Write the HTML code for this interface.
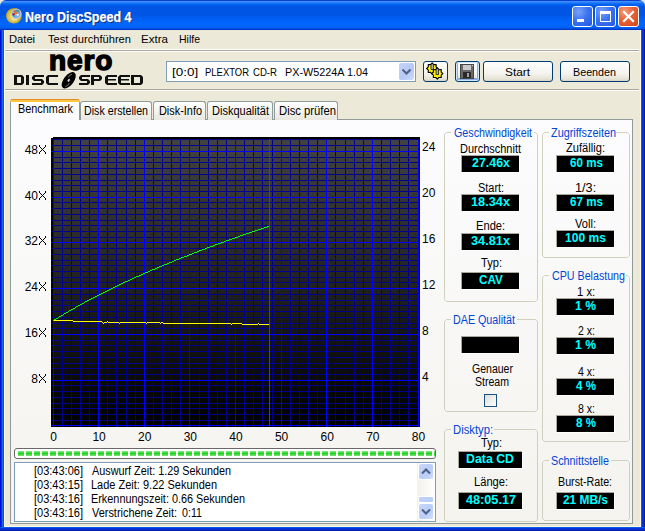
<!DOCTYPE html>
<html><head><meta charset="utf-8">
<style>
html,body{margin:0;padding:0;}
body{width:645px;height:531px;overflow:hidden;position:relative;background:#ECE9D8;font-family:"Liberation Sans", sans-serif;}
.t{position:absolute;white-space:pre;}
.r{position:absolute;box-sizing:border-box;}
svg{position:absolute;}
</style></head><body>

<div class="r" style="left:0px;top:0px;width:645px;height:30px;background:linear-gradient(to bottom,#0A3ED0 0px,#0A3ED0 1px,#3D8FFF 1px,#3D8FFF 2px,#2A7FFF 2px,#2A7FFF 3px,#1070F8 3px,#1070F8 4px,#0064F0 4px,#0064F0 5px,#005CEA 5px,#005CEA 6px,#0055E5 6px,#0055E5 7px,#0055E5 7px,#0055E5 8px,#0055E5 8px,#0055E5 9px,#0055E5 9px,#0055E5 10px,#0055E5 10px,#0055E5 11px,#0055E5 11px,#0055E5 12px,#0055E5 12px,#0055E5 13px,#0055E5 13px,#0055E5 14px,#0055E5 14px,#0055E5 15px,#0055E5 15px,#0055E5 16px,#005AEC 16px,#005AEC 17px,#005CEE 17px,#005CEE 18px,#005EF0 18px,#005EF0 19px,#0060F2 19px,#0060F2 20px,#0062F6 20px,#0062F6 21px,#0064FA 21px,#0064FA 22px,#0066FF 22px,#0066FF 23px,#0066FF 23px,#0066FF 24px,#0066FE 24px,#0066FE 25px,#0064FA 25px,#0064FA 26px,#0063F8 26px,#0063F8 27px,#0060F4 27px,#0060F4 28px,#0052E0 28px,#0052E0 29px,#0036C8 29px,#0036C8 30px);border-radius:6px 6px 0 0;"></div>
<div class="r" style="left:0px;top:30px;width:4px;height:501px;background:linear-gradient(to right,#0014D0 0px,#0014D0 1px,#0832D8 1px,#0832D8 2px,#1A6AF0 2px,#1A6AF0 3px,#0052E2 3px);"></div>
<div class="r" style="left:641px;top:30px;width:4px;height:501px;background:linear-gradient(to right,#0A5CE8 0px,#0A5CE8 1px,#0831D9 1px,#0831D9 3px,#001A9C 3px);"></div>
<div class="r" style="left:0px;top:527px;width:645px;height:4px;background:linear-gradient(to bottom,#0A5CE8 0px,#0A5CE8 1px,#0831D9 1px,#0831D9 3px,#001A9C 3px);"></div>
<div class="r" style="left:4px;top:30px;width:1px;height:497px;background:#FFF8E4;"></div>
<div class="r" style="left:4px;top:526px;width:637px;height:1px;background:#FFF8E4;"></div>
<div class="r" style="left:640px;top:30px;width:1px;height:497px;background:#FFF8E4;"></div>
<svg style="left:0;top:0" width="30" height="30" viewBox="0 0 30 30">
<defs><radialGradient id="dg" cx="45%" cy="55%" r="55%"><stop offset="0" stop-color="#F4E8A0"/><stop offset="0.5" stop-color="#E0C850"/><stop offset="0.85" stop-color="#C8A828"/><stop offset="1" stop-color="#A08818"/></radialGradient>
<radialGradient id="gg" cx="60%" cy="60%" r="60%"><stop offset="0" stop-color="#A8D8F8"/><stop offset="1" stop-color="#2070D0"/></radialGradient></defs>
<ellipse cx="14" cy="15.8" rx="7.9" ry="7.7" fill="url(#dg)"/>
<ellipse cx="14.5" cy="19.5" rx="3" ry="1.6" fill="#F0E8C0" opacity="0.6"/>
<circle cx="16.3" cy="13.75" r="4.6" fill="url(#gg)" stroke="#C8CCD6" stroke-width="1.3"/>
<path d="M14.3 10.6 L17.5 14.2" stroke="#F06A30" stroke-width="1.5"/>
<path d="M15.2 12.6 L14.2 14.5" stroke="#E85020" stroke-width="1.1"/>
<circle cx="13.5" cy="14.6" r="1.1" fill="#C81010"/>
<circle cx="13.4" cy="12.2" r="0.8" fill="#F8D800"/>
<path d="M16.8 10 L19 11.2" stroke="#30A040" stroke-width="1.2"/>
<circle cx="17.8" cy="14.8" r="1" fill="#F4F4F4"/>
</svg>
<div class="t" style="left:26px;top:10px;font-size:14px;line-height:16px;font-weight:bold;color:#0A1E6E;transform-origin:0 0;transform:scaleX(0.895);">Nero DiscSpeed 4</div>
<div class="t" style="left:25px;top:9px;font-size:14px;line-height:16px;font-weight:bold;color:#FFFFFF;-webkit-text-stroke:0.25px #fff;transform-origin:0 0;transform:scaleX(0.895);">Nero DiscSpeed 4</div>
<div class="r" style="left:572px;top:6px;width:21px;height:21px;border:1px solid #FFFFFF;border-radius:3px;background:radial-gradient(circle at 30% 25%,#7AA2F8 0%,#3D74F0 45%,#2058E6 100%);"></div>
<div class="r" style="left:595px;top:6px;width:21px;height:21px;border:1px solid #FFFFFF;border-radius:3px;background:radial-gradient(circle at 30% 25%,#7AA2F8 0%,#3D74F0 45%,#2058E6 100%);"></div>
<div class="r" style="left:618px;top:6px;width:21px;height:21px;border:1px solid #FFFFFF;border-radius:3px;background:radial-gradient(circle at 30% 25%,#F39C7A 0%,#E5633A 45%,#D2421A 100%);"></div>
<div class="r" style="left:577px;top:19px;width:7px;height:3px;background:#FFFFFF;"></div>
<div class="r" style="left:600px;top:11px;width:11px;height:11px;border:1px solid #fff;border-top-width:3px;"></div>
<svg style="left:618px;top:6px" width="21" height="21" viewBox="0 0 21 21"><path d="M6 6 L15 15 M15 6 L6 15" stroke="#fff" stroke-width="2.2" stroke-linecap="square"/></svg>
<div class="r" style="left:5px;top:49px;width:634px;height:1px;background:#FFFFFF;"></div>
<div class="r" style="left:5px;top:50px;width:634px;height:1px;background:#ACA899;"></div>
<div class="r" style="left:5px;top:51px;width:634px;height:1px;background:#FFFFFF;"></div>
<svg style="left:0;top:0" width="160" height="95" viewBox="0 0 160 95"><path fill-rule="evenodd" fill="#111" d="M14,75 H22 L24,77 V83 L22,85 H14 Z M17,77 V83 H21 V77 Z M26,75 H29 V85 H26 Z M34,75 H44 V77 H35 V79 H42 L44,81 V83 L42,85 H32 V83 H41 V81 H34 L32,79 V77 Z M48,75 H58 V77 H49 V83 H58 V85 H48 L46,83 V77 Z M81,75 H90 V77 H82 V79 H88 L90,81 V83 L88,85 H79 V83 H87 V81 H81 L79,79 V77 Z M91,75 H100 L102,77 V79 L100,81 H94 V85 H91 Z M94,77 V79 H99 V77 Z M107,75 H117 V77 H108 V79 H116 V80.6 H108 V83 H117 V85 H107 L105,83 V77 Z M120,75 H130 V77 H121 V79 H129 V80.6 H121 V83 H130 V85 H120 L118,83 V77 Z M131,75 H141 L143,77 V83 L141,85 H131 Z M134,77 V83 H140 V77 Z"/><text x="49" y="69.5" font-family="Liberation Sans" font-weight="bold" font-size="28" letter-spacing="0.9" fill="#000" stroke="#000" stroke-width="1.5">nero</text><g transform="rotate(-52 68.7 80.3)"><ellipse cx="68.7" cy="80.3" rx="9.6" ry="5" fill="#000"/><ellipse cx="68.7" cy="80.3" rx="1.6" ry="1" fill="#D8D8D0"/><path d="M61.5 81.5 Q64 83.5 67 82.5" stroke="#9A9A90" stroke-width="0.7" fill="none"/><path d="M70.5 78.2 Q73.5 77.5 75.5 79" stroke="#9A9A90" stroke-width="0.7" fill="none"/></g></svg>
<div class="r" style="left:5px;top:89px;width:634px;height:1px;background:#ACA899;"></div>
<div class="r" style="left:5px;top:90px;width:634px;height:1px;background:#FFFFFF;"></div>
<div class="r" style="left:166px;top:61px;width:250px;height:21px;border:1px solid #7F9DB9;background:#fff;"></div>
<div class="r" style="left:399px;top:63px;width:15px;height:17px;border-radius:2px;background:linear-gradient(135deg,#C6D3F7 0%,#B4C9F7 60%,#D0DDFB 100%);"></div>
<svg style="left:399px;top:63px" width="15" height="17" viewBox="0 0 15 17"><path d="M3.5 6.5 L7.5 10.5 L11.5 6.5" stroke="#4D6185" stroke-width="2" fill="none"/></svg>
<div class="r" style="left:423px;top:61px;width:25px;height:21px;border:1px solid #003C74;border-radius:3px;background:linear-gradient(to bottom,#FFFFFF 0%,#F4F3EE 60%,#E6E3D6 90%,#D6D0C5 100%);"></div>
<div class="r" style="left:455px;top:61px;width:25px;height:21px;border:1px solid #003C74;border-radius:3px;background:linear-gradient(to bottom,#FFFFFF 0%,#F4F3EE 60%,#E6E3D6 90%,#D6D0C5 100%);box-shadow:inset 0 0 0 1px #CEE7FF,inset 0 -1px 0 2px #89ADE4;"></div>
<div class="r" style="left:483px;top:61px;width:70px;height:21px;border:1px solid #003C74;border-radius:3px;background:linear-gradient(to bottom,#FFFFFF 0%,#F4F3EE 60%,#E6E3D6 90%,#D6D0C5 100%);"></div>
<div class="r" style="left:560px;top:61px;width:70px;height:21px;border:1px solid #003C74;border-radius:3px;background:linear-gradient(to bottom,#FFFFFF 0%,#F4F3EE 60%,#E6E3D6 90%,#D6D0C5 100%);"></div>
<svg style="left:0;top:0" width="645" height="100"><polygon points="437.80,68.50 436.08,70.11 436.16,72.46 433.81,72.38 432.20,74.10 430.59,72.38 428.24,72.46 428.32,70.11 426.60,68.50 428.32,66.89 428.24,64.54 430.59,64.62 432.20,62.90 433.81,64.62 436.16,64.54 436.08,66.89" fill="#FFF000" stroke="#000" stroke-width="1.1" stroke-linejoin="round"/><polygon points="442.90,73.60 441.18,75.21 441.26,77.56 438.91,77.48 437.30,79.20 435.69,77.48 433.34,77.56 433.42,75.21 431.70,73.60 433.42,71.99 433.34,69.64 435.69,69.72 437.30,68.00 438.91,69.72 441.26,69.64 441.18,71.99" fill="#FFF000" stroke="#000" stroke-width="1.1" stroke-linejoin="round"/><path d="M431 69.5 V64.5 Q432.2 62.8 433.4 64.5 V69.5 Z" fill="#B8B8D0" stroke="#111" stroke-width="0.8"/><path d="M436.1 74.6 V69.6 Q437.3 67.9 438.5 69.6 V74.6 Z" fill="#B8B8D0" stroke="#111" stroke-width="0.8"/></svg>
<svg style="left:460px;top:64px" width="14" height="15" viewBox="0 0 14 15" shape-rendering="crispEdges">
<path d="M0 0 H13 L14 1 V15 H0 Z" fill="#444"/>
<rect x="1" y="1" width="12" height="13" fill="#6A6A6A"/>
<rect x="3" y="1" width="8" height="5" fill="#C8C8C8"/>
<rect x="12" y="1" width="1" height="1" fill="#E0E0E0"/>
<rect x="3" y="8" width="8" height="6" fill="#2A2A2A"/>
<rect x="7" y="9" width="2" height="4" fill="#A0A0A0"/>
</svg>
<div class="r" style="left:10px;top:119px;width:623px;height:405px;border:1px solid #919B9C;border-right-color:#919B9C;background:linear-gradient(to bottom,#FCFCFE 0%,#F4F3EE 100%);"></div>
<div class="r" style="left:80px;top:101px;width:72px;height:19px;border:1px solid #919B9C;border-bottom:none;border-radius:3px 3px 0 0;background:linear-gradient(to bottom,#FFFFFF 0%,#F3F3EF 50%,#E8E8E0 100%);"></div>
<div class="r" style="left:153px;top:101px;width:53px;height:19px;border:1px solid #919B9C;border-bottom:none;border-radius:3px 3px 0 0;background:linear-gradient(to bottom,#FFFFFF 0%,#F3F3EF 50%,#E8E8E0 100%);"></div>
<div class="r" style="left:207px;top:101px;width:66px;height:19px;border:1px solid #919B9C;border-bottom:none;border-radius:3px 3px 0 0;background:linear-gradient(to bottom,#FFFFFF 0%,#F3F3EF 50%,#E8E8E0 100%);"></div>
<div class="r" style="left:274px;top:101px;width:64px;height:19px;border:1px solid #919B9C;border-bottom:none;border-radius:3px 3px 0 0;background:linear-gradient(to bottom,#FFFFFF 0%,#F3F3EF 50%,#E8E8E0 100%);"></div>
<div class="r" style="left:10px;top:99px;width:70px;height:21px;border:1px solid #919B9C;border-bottom:none;border-top:none;border-radius:3px 3px 0 0;background:#FCFCFE;"></div>
<div class="r" style="left:10px;top:99px;width:70px;height:3px;border-radius:3px 3px 0 0;background:linear-gradient(to bottom,#E68B2C 0,#E68B2C 1px,#FFC73C 1px,#FFC73C 3px);"></div>
<svg style="left:0;top:0" width="645" height="531" viewBox="0 0 645 531" shape-rendering="crispEdges">
<defs><linearGradient id="cg" x1="0" y1="0" x2="0" y2="1"><stop offset="0" stop-color="#424242"/><stop offset="1" stop-color="#000"/></linearGradient></defs>
<rect x="51" y="138" width="369" height="289" fill="#000"/>
<rect x="53" y="137" width="367" height="1" fill="#000"/>
<rect x="53" y="139" width="366" height="287" fill="url(#cg)"/>
<rect x="51" y="425" width="368" height="1" fill="#0000FF"/>
<rect x="51" y="420" width="368" height="1" fill="#000088"/>
<rect x="51" y="414" width="368" height="1" fill="#000088"/>
<rect x="51" y="408" width="368" height="1" fill="#000088"/>
<rect x="51" y="403" width="368" height="1" fill="#000088"/>
<rect x="51" y="397" width="368" height="1" fill="#000088"/>
<rect x="51" y="391" width="368" height="1" fill="#000088"/>
<rect x="51" y="385" width="368" height="1" fill="#000088"/>
<rect x="51" y="380" width="368" height="1" fill="#0000FF"/>
<rect x="51" y="374" width="368" height="1" fill="#000088"/>
<rect x="51" y="368" width="368" height="1" fill="#000088"/>
<rect x="51" y="363" width="368" height="1" fill="#000088"/>
<rect x="51" y="357" width="368" height="1" fill="#000088"/>
<rect x="51" y="351" width="368" height="1" fill="#000088"/>
<rect x="51" y="345" width="368" height="1" fill="#000088"/>
<rect x="51" y="340" width="368" height="1" fill="#000088"/>
<rect x="51" y="334" width="368" height="1" fill="#0000FF"/>
<rect x="51" y="328" width="368" height="1" fill="#000088"/>
<rect x="51" y="323" width="368" height="1" fill="#000088"/>
<rect x="51" y="317" width="368" height="1" fill="#000088"/>
<rect x="51" y="311" width="368" height="1" fill="#000088"/>
<rect x="51" y="305" width="368" height="1" fill="#000088"/>
<rect x="51" y="300" width="368" height="1" fill="#000088"/>
<rect x="51" y="294" width="368" height="1" fill="#000088"/>
<rect x="51" y="288" width="368" height="1" fill="#0000FF"/>
<rect x="51" y="282" width="368" height="1" fill="#000088"/>
<rect x="51" y="277" width="368" height="1" fill="#000088"/>
<rect x="51" y="271" width="368" height="1" fill="#000088"/>
<rect x="51" y="265" width="368" height="1" fill="#000088"/>
<rect x="51" y="260" width="368" height="1" fill="#000088"/>
<rect x="51" y="254" width="368" height="1" fill="#000088"/>
<rect x="51" y="248" width="368" height="1" fill="#000088"/>
<rect x="51" y="242" width="368" height="1" fill="#0000FF"/>
<rect x="51" y="237" width="368" height="1" fill="#000088"/>
<rect x="51" y="231" width="368" height="1" fill="#000088"/>
<rect x="51" y="225" width="368" height="1" fill="#000088"/>
<rect x="51" y="220" width="368" height="1" fill="#000088"/>
<rect x="51" y="214" width="368" height="1" fill="#000088"/>
<rect x="51" y="208" width="368" height="1" fill="#000088"/>
<rect x="51" y="202" width="368" height="1" fill="#000088"/>
<rect x="51" y="197" width="368" height="1" fill="#0000FF"/>
<rect x="51" y="191" width="368" height="1" fill="#000088"/>
<rect x="51" y="185" width="368" height="1" fill="#000088"/>
<rect x="51" y="180" width="368" height="1" fill="#000088"/>
<rect x="51" y="174" width="368" height="1" fill="#000088"/>
<rect x="51" y="168" width="368" height="1" fill="#000088"/>
<rect x="51" y="162" width="368" height="1" fill="#000088"/>
<rect x="51" y="157" width="368" height="1" fill="#000088"/>
<rect x="51" y="151" width="368" height="1" fill="#0000FF"/>
<rect x="51" y="145" width="368" height="1" fill="#000088"/>
<rect x="51" y="139" width="368" height="1" fill="#000088"/>
<rect x="53" y="139" width="1" height="288" fill="#0000FF"/>
<rect x="62" y="139" width="1" height="288" fill="#000088"/>
<rect x="71" y="139" width="1" height="288" fill="#000088"/>
<rect x="80" y="139" width="1" height="288" fill="#000088"/>
<rect x="89" y="139" width="1" height="288" fill="#000088"/>
<rect x="98" y="139" width="1" height="288" fill="#0000FF"/>
<rect x="107" y="139" width="1" height="288" fill="#000088"/>
<rect x="116" y="139" width="1" height="288" fill="#000088"/>
<rect x="126" y="139" width="1" height="288" fill="#000088"/>
<rect x="135" y="139" width="1" height="288" fill="#000088"/>
<rect x="144" y="139" width="1" height="288" fill="#0000FF"/>
<rect x="153" y="139" width="1" height="288" fill="#000088"/>
<rect x="162" y="139" width="1" height="288" fill="#000088"/>
<rect x="171" y="139" width="1" height="288" fill="#000088"/>
<rect x="180" y="139" width="1" height="288" fill="#000088"/>
<rect x="189" y="139" width="1" height="288" fill="#0000FF"/>
<rect x="199" y="139" width="1" height="288" fill="#000088"/>
<rect x="208" y="139" width="1" height="288" fill="#000088"/>
<rect x="217" y="139" width="1" height="288" fill="#000088"/>
<rect x="226" y="139" width="1" height="288" fill="#000088"/>
<rect x="235" y="139" width="1" height="288" fill="#0000FF"/>
<rect x="244" y="139" width="1" height="288" fill="#000088"/>
<rect x="253" y="139" width="1" height="288" fill="#000088"/>
<rect x="262" y="139" width="1" height="288" fill="#000088"/>
<rect x="272" y="139" width="1" height="288" fill="#000088"/>
<rect x="281" y="139" width="1" height="288" fill="#0000FF"/>
<rect x="290" y="139" width="1" height="288" fill="#000088"/>
<rect x="299" y="139" width="1" height="288" fill="#000088"/>
<rect x="308" y="139" width="1" height="288" fill="#000088"/>
<rect x="317" y="139" width="1" height="288" fill="#000088"/>
<rect x="326" y="139" width="1" height="288" fill="#0000FF"/>
<rect x="335" y="139" width="1" height="288" fill="#000088"/>
<rect x="345" y="139" width="1" height="288" fill="#000088"/>
<rect x="354" y="139" width="1" height="288" fill="#000088"/>
<rect x="363" y="139" width="1" height="288" fill="#000088"/>
<rect x="372" y="139" width="1" height="288" fill="#0000FF"/>
<rect x="381" y="139" width="1" height="288" fill="#000088"/>
<rect x="390" y="139" width="1" height="288" fill="#000088"/>
<rect x="399" y="139" width="1" height="288" fill="#000088"/>
<rect x="408" y="139" width="1" height="288" fill="#000088"/>
<rect x="418" y="139" width="1" height="288" fill="#0000FF"/>
<rect x="51" y="425" width="368" height="1" fill="#0000FF"/>
<rect x="51" y="380" width="368" height="1" fill="#0000FF"/>
<rect x="51" y="334" width="368" height="1" fill="#0000FF"/>
<rect x="51" y="288" width="368" height="1" fill="#0000FF"/>
<rect x="51" y="242" width="368" height="1" fill="#0000FF"/>
<rect x="51" y="197" width="368" height="1" fill="#0000FF"/>
<rect x="51" y="151" width="368" height="1" fill="#0000FF"/>
<rect x="51" y="139" width="368" height="1" fill="#000088"/>
<rect x="53" y="320" width="1" height="1" fill="#FFFF00"/><rect x="54" y="320" width="1" height="1" fill="#FFFF00"/><rect x="55" y="320" width="1" height="1" fill="#FFFF00"/><rect x="56" y="320" width="1" height="1" fill="#FFFF00"/><rect x="57" y="320" width="1" height="1" fill="#FFFF00"/><rect x="58" y="320" width="1" height="1" fill="#FFFF00"/><rect x="59" y="320" width="1" height="1" fill="#FFFF00"/><rect x="60" y="320" width="1" height="1" fill="#FFFF00"/><rect x="61" y="320" width="1" height="1" fill="#FFFF00"/><rect x="62" y="320" width="1" height="1" fill="#FFFF00"/><rect x="63" y="320" width="1" height="1" fill="#FFFF00"/><rect x="64" y="320" width="1" height="1" fill="#FFFF00"/><rect x="65" y="320" width="1" height="1" fill="#FFFF00"/><rect x="66" y="320" width="1" height="1" fill="#FFFF00"/><rect x="67" y="320" width="1" height="1" fill="#FFFF00"/><rect x="68" y="320" width="1" height="1" fill="#FFFF00"/><rect x="69" y="320" width="1" height="1" fill="#FFFF00"/><rect x="70" y="320" width="1" height="1" fill="#FFFF00"/><rect x="71" y="320" width="1" height="1" fill="#FFFF00"/><rect x="72" y="320" width="1" height="1" fill="#FFFF00"/><rect x="73" y="321" width="1" height="1" fill="#FFFF00"/><rect x="74" y="321" width="1" height="1" fill="#FFFF00"/><rect x="75" y="321" width="1" height="1" fill="#FFFF00"/><rect x="76" y="321" width="1" height="1" fill="#FFFF00"/><rect x="77" y="321" width="1" height="1" fill="#FFFF00"/><rect x="78" y="321" width="1" height="1" fill="#FFFF00"/><rect x="79" y="321" width="1" height="1" fill="#FFFF00"/><rect x="80" y="321" width="1" height="1" fill="#FFFF00"/><rect x="81" y="321" width="1" height="1" fill="#FFFF00"/><rect x="82" y="321" width="1" height="1" fill="#FFFF00"/><rect x="83" y="321" width="1" height="1" fill="#FFFF00"/><rect x="84" y="321" width="1" height="1" fill="#FFFF00"/><rect x="85" y="321" width="1" height="1" fill="#FFFF00"/><rect x="86" y="321" width="1" height="1" fill="#FFFF00"/><rect x="87" y="321" width="1" height="1" fill="#FFFF00"/><rect x="88" y="321" width="1" height="1" fill="#FFFF00"/><rect x="89" y="321" width="1" height="1" fill="#FFFF00"/><rect x="90" y="321" width="1" height="1" fill="#FFFF00"/><rect x="91" y="321" width="1" height="1" fill="#FFFF00"/><rect x="92" y="321" width="1" height="1" fill="#FFFF00"/><rect x="93" y="321" width="1" height="1" fill="#FFFF00"/><rect x="94" y="321" width="1" height="1" fill="#FFFF00"/><rect x="95" y="321" width="1" height="1" fill="#FFFF00"/><rect x="96" y="321" width="1" height="1" fill="#FFFF00"/><rect x="97" y="321" width="1" height="1" fill="#FFFF00"/><rect x="98" y="321" width="1" height="1" fill="#FFFF00"/><rect x="99" y="321" width="1" height="1" fill="#FFFF00"/><rect x="100" y="321" width="1" height="1" fill="#FFFF00"/><rect x="101" y="321" width="1" height="1" fill="#FFFF00"/><rect x="102" y="322" width="1" height="1" fill="#FFFF00"/><rect x="103" y="323" width="1" height="1" fill="#FFFF00"/><rect x="104" y="322" width="1" height="1" fill="#FFFF00"/><rect x="105" y="322" width="1" height="1" fill="#FFFF00"/><rect x="106" y="322" width="1" height="1" fill="#FFFF00"/><rect x="107" y="321" width="1" height="1" fill="#FFFF00"/><rect x="108" y="322" width="1" height="1" fill="#FFFF00"/><rect x="109" y="322" width="1" height="1" fill="#FFFF00"/><rect x="110" y="322" width="1" height="1" fill="#FFFF00"/><rect x="111" y="322" width="1" height="1" fill="#FFFF00"/><rect x="112" y="322" width="1" height="1" fill="#FFFF00"/><rect x="113" y="322" width="1" height="1" fill="#FFFF00"/><rect x="114" y="322" width="1" height="1" fill="#FFFF00"/><rect x="115" y="322" width="1" height="1" fill="#FFFF00"/><rect x="116" y="322" width="1" height="1" fill="#FFFF00"/><rect x="117" y="322" width="1" height="1" fill="#FFFF00"/><rect x="118" y="322" width="1" height="1" fill="#FFFF00"/><rect x="119" y="323" width="1" height="1" fill="#FFFF00"/><rect x="120" y="322" width="1" height="1" fill="#FFFF00"/><rect x="121" y="322" width="1" height="1" fill="#FFFF00"/><rect x="122" y="322" width="1" height="1" fill="#FFFF00"/><rect x="123" y="322" width="1" height="1" fill="#FFFF00"/><rect x="124" y="322" width="1" height="1" fill="#FFFF00"/><rect x="125" y="322" width="1" height="1" fill="#FFFF00"/><rect x="126" y="322" width="1" height="1" fill="#FFFF00"/><rect x="127" y="322" width="1" height="1" fill="#FFFF00"/><rect x="128" y="322" width="1" height="1" fill="#FFFF00"/><rect x="129" y="322" width="1" height="1" fill="#FFFF00"/><rect x="130" y="322" width="1" height="1" fill="#FFFF00"/><rect x="131" y="322" width="1" height="1" fill="#FFFF00"/><rect x="132" y="322" width="1" height="1" fill="#FFFF00"/><rect x="133" y="322" width="1" height="1" fill="#FFFF00"/><rect x="134" y="322" width="1" height="1" fill="#FFFF00"/><rect x="135" y="322" width="1" height="1" fill="#FFFF00"/><rect x="136" y="322" width="1" height="1" fill="#FFFF00"/><rect x="137" y="322" width="1" height="1" fill="#FFFF00"/><rect x="138" y="322" width="1" height="1" fill="#FFFF00"/><rect x="139" y="322" width="1" height="1" fill="#FFFF00"/><rect x="140" y="322" width="1" height="1" fill="#FFFF00"/><rect x="141" y="322" width="1" height="1" fill="#FFFF00"/><rect x="142" y="322" width="1" height="1" fill="#FFFF00"/><rect x="143" y="322" width="1" height="1" fill="#FFFF00"/><rect x="144" y="322" width="1" height="1" fill="#FFFF00"/><rect x="145" y="322" width="1" height="1" fill="#FFFF00"/><rect x="146" y="323" width="1" height="1" fill="#FFFF00"/><rect x="147" y="322" width="1" height="1" fill="#FFFF00"/><rect x="148" y="322" width="1" height="1" fill="#FFFF00"/><rect x="149" y="322" width="1" height="1" fill="#FFFF00"/><rect x="150" y="322" width="1" height="1" fill="#FFFF00"/><rect x="151" y="322" width="1" height="1" fill="#FFFF00"/><rect x="152" y="322" width="1" height="1" fill="#FFFF00"/><rect x="153" y="322" width="1" height="1" fill="#FFFF00"/><rect x="154" y="322" width="1" height="1" fill="#FFFF00"/><rect x="155" y="322" width="1" height="1" fill="#FFFF00"/><rect x="156" y="322" width="1" height="1" fill="#FFFF00"/><rect x="157" y="322" width="1" height="1" fill="#FFFF00"/><rect x="158" y="322" width="1" height="1" fill="#FFFF00"/><rect x="159" y="322" width="1" height="1" fill="#FFFF00"/><rect x="160" y="323" width="1" height="1" fill="#FFFF00"/><rect x="161" y="322" width="1" height="1" fill="#FFFF00"/><rect x="162" y="322" width="1" height="1" fill="#FFFF00"/><rect x="163" y="323" width="1" height="1" fill="#FFFF00"/><rect x="164" y="323" width="1" height="1" fill="#FFFF00"/><rect x="165" y="323" width="1" height="1" fill="#FFFF00"/><rect x="166" y="323" width="1" height="1" fill="#FFFF00"/><rect x="167" y="323" width="1" height="1" fill="#FFFF00"/><rect x="168" y="323" width="1" height="1" fill="#FFFF00"/><rect x="169" y="323" width="1" height="1" fill="#FFFF00"/><rect x="170" y="323" width="1" height="1" fill="#FFFF00"/><rect x="171" y="323" width="1" height="1" fill="#FFFF00"/><rect x="172" y="323" width="1" height="1" fill="#FFFF00"/><rect x="173" y="323" width="1" height="1" fill="#FFFF00"/><rect x="174" y="323" width="1" height="1" fill="#FFFF00"/><rect x="175" y="323" width="1" height="1" fill="#FFFF00"/><rect x="176" y="323" width="1" height="1" fill="#FFFF00"/><rect x="177" y="323" width="1" height="1" fill="#FFFF00"/><rect x="178" y="323" width="1" height="1" fill="#FFFF00"/><rect x="179" y="323" width="1" height="1" fill="#FFFF00"/><rect x="180" y="323" width="1" height="1" fill="#FFFF00"/><rect x="181" y="323" width="1" height="1" fill="#FFFF00"/><rect x="182" y="323" width="1" height="1" fill="#FFFF00"/><rect x="183" y="323" width="1" height="1" fill="#FFFF00"/><rect x="184" y="323" width="1" height="1" fill="#FFFF00"/><rect x="185" y="323" width="1" height="1" fill="#FFFF00"/><rect x="186" y="323" width="1" height="1" fill="#FFFF00"/><rect x="187" y="323" width="1" height="1" fill="#FFFF00"/><rect x="188" y="323" width="1" height="1" fill="#FFFF00"/><rect x="189" y="323" width="1" height="1" fill="#FFFF00"/><rect x="190" y="323" width="1" height="1" fill="#FFFF00"/><rect x="191" y="323" width="1" height="1" fill="#FFFF00"/><rect x="192" y="323" width="1" height="1" fill="#FFFF00"/><rect x="193" y="323" width="1" height="1" fill="#FFFF00"/><rect x="194" y="323" width="1" height="1" fill="#FFFF00"/><rect x="195" y="323" width="1" height="1" fill="#FFFF00"/><rect x="196" y="323" width="1" height="1" fill="#FFFF00"/><rect x="197" y="323" width="1" height="1" fill="#FFFF00"/><rect x="198" y="323" width="1" height="1" fill="#FFFF00"/><rect x="199" y="323" width="1" height="1" fill="#FFFF00"/><rect x="200" y="323" width="1" height="1" fill="#FFFF00"/><rect x="201" y="323" width="1" height="1" fill="#FFFF00"/><rect x="202" y="323" width="1" height="1" fill="#FFFF00"/><rect x="203" y="323" width="1" height="1" fill="#FFFF00"/><rect x="204" y="323" width="1" height="1" fill="#FFFF00"/><rect x="205" y="323" width="1" height="1" fill="#FFFF00"/><rect x="206" y="323" width="1" height="1" fill="#FFFF00"/><rect x="207" y="323" width="1" height="1" fill="#FFFF00"/><rect x="208" y="323" width="1" height="1" fill="#FFFF00"/><rect x="209" y="323" width="1" height="1" fill="#FFFF00"/><rect x="210" y="323" width="1" height="1" fill="#FFFF00"/><rect x="211" y="323" width="1" height="1" fill="#FFFF00"/><rect x="212" y="323" width="1" height="1" fill="#FFFF00"/><rect x="213" y="323" width="1" height="1" fill="#FFFF00"/><rect x="214" y="323" width="1" height="1" fill="#FFFF00"/><rect x="215" y="323" width="1" height="1" fill="#FFFF00"/><rect x="216" y="323" width="1" height="1" fill="#FFFF00"/><rect x="217" y="323" width="1" height="1" fill="#FFFF00"/><rect x="218" y="323" width="1" height="1" fill="#FFFF00"/><rect x="219" y="323" width="1" height="1" fill="#FFFF00"/><rect x="220" y="323" width="1" height="1" fill="#FFFF00"/><rect x="221" y="323" width="1" height="1" fill="#FFFF00"/><rect x="222" y="323" width="1" height="1" fill="#FFFF00"/><rect x="223" y="323" width="1" height="1" fill="#FFFF00"/><rect x="224" y="323" width="1" height="1" fill="#FFFF00"/><rect x="225" y="323" width="1" height="1" fill="#FFFF00"/><rect x="226" y="323" width="1" height="1" fill="#FFFF00"/><rect x="227" y="323" width="1" height="1" fill="#FFFF00"/><rect x="228" y="323" width="1" height="1" fill="#FFFF00"/><rect x="229" y="323" width="1" height="1" fill="#FFFF00"/><rect x="230" y="323" width="1" height="1" fill="#FFFF00"/><rect x="231" y="324" width="1" height="1" fill="#FFFF00"/><rect x="232" y="323" width="1" height="1" fill="#FFFF00"/><rect x="233" y="323" width="1" height="1" fill="#FFFF00"/><rect x="234" y="323" width="1" height="1" fill="#FFFF00"/><rect x="235" y="323" width="1" height="1" fill="#FFFF00"/><rect x="236" y="323" width="1" height="1" fill="#FFFF00"/><rect x="237" y="323" width="1" height="1" fill="#FFFF00"/><rect x="238" y="323" width="1" height="1" fill="#FFFF00"/><rect x="239" y="323" width="1" height="1" fill="#FFFF00"/><rect x="240" y="323" width="1" height="1" fill="#FFFF00"/><rect x="241" y="323" width="1" height="1" fill="#FFFF00"/><rect x="242" y="324" width="1" height="1" fill="#FFFF00"/><rect x="243" y="324" width="1" height="1" fill="#FFFF00"/><rect x="244" y="324" width="1" height="1" fill="#FFFF00"/><rect x="245" y="324" width="1" height="1" fill="#FFFF00"/><rect x="246" y="324" width="1" height="1" fill="#FFFF00"/><rect x="247" y="324" width="1" height="1" fill="#FFFF00"/><rect x="248" y="324" width="1" height="1" fill="#FFFF00"/><rect x="249" y="324" width="1" height="1" fill="#FFFF00"/><rect x="250" y="324" width="1" height="1" fill="#FFFF00"/><rect x="251" y="324" width="1" height="1" fill="#FFFF00"/><rect x="252" y="324" width="1" height="1" fill="#FFFF00"/><rect x="253" y="324" width="1" height="1" fill="#FFFF00"/><rect x="254" y="324" width="1" height="1" fill="#FFFF00"/><rect x="255" y="324" width="1" height="1" fill="#FFFF00"/><rect x="256" y="324" width="1" height="1" fill="#FFFF00"/><rect x="257" y="324" width="1" height="1" fill="#FFFF00"/><rect x="258" y="323" width="1" height="1" fill="#FFFF00"/><rect x="259" y="324" width="1" height="1" fill="#FFFF00"/><rect x="260" y="324" width="1" height="1" fill="#FFFF00"/><rect x="261" y="324" width="1" height="1" fill="#FFFF00"/><rect x="262" y="324" width="1" height="1" fill="#FFFF00"/><rect x="263" y="324" width="1" height="1" fill="#FFFF00"/><rect x="264" y="324" width="1" height="1" fill="#FFFF00"/><rect x="265" y="324" width="1" height="1" fill="#FFFF00"/><rect x="266" y="324" width="1" height="1" fill="#FFFF00"/><rect x="267" y="324" width="1" height="1" fill="#FFFF00"/><rect x="268" y="324" width="1" height="1" fill="#FFFF00"/>
<rect x="53" y="320" width="1" height="1" fill="#00FF00"/><rect x="54" y="319" width="1" height="1" fill="#00FF00"/><rect x="55" y="319" width="1" height="1" fill="#00FF00"/><rect x="56" y="318" width="1" height="1" fill="#00FF00"/><rect x="57" y="318" width="1" height="1" fill="#00FF00"/><rect x="58" y="317" width="1" height="1" fill="#00FF00"/><rect x="59" y="316" width="1" height="1" fill="#00FF00"/><rect x="60" y="316" width="1" height="1" fill="#00FF00"/><rect x="61" y="315" width="1" height="1" fill="#00FF00"/><rect x="62" y="315" width="1" height="1" fill="#00FF00"/><rect x="63" y="314" width="1" height="1" fill="#00FF00"/><rect x="64" y="313" width="1" height="1" fill="#00FF00"/><rect x="65" y="313" width="1" height="1" fill="#00FF00"/><rect x="66" y="312" width="1" height="1" fill="#00FF00"/><rect x="67" y="312" width="1" height="1" fill="#00FF00"/><rect x="68" y="311" width="1" height="1" fill="#00FF00"/><rect x="69" y="310" width="1" height="1" fill="#00FF00"/><rect x="70" y="310" width="1" height="1" fill="#00FF00"/><rect x="71" y="309" width="1" height="1" fill="#00FF00"/><rect x="72" y="309" width="1" height="1" fill="#00FF00"/><rect x="73" y="308" width="1" height="1" fill="#00FF00"/><rect x="74" y="308" width="1" height="1" fill="#00FF00"/><rect x="75" y="307" width="1" height="1" fill="#00FF00"/><rect x="76" y="306" width="1" height="1" fill="#00FF00"/><rect x="77" y="306" width="1" height="1" fill="#00FF00"/><rect x="78" y="305" width="1" height="1" fill="#00FF00"/><rect x="79" y="305" width="1" height="1" fill="#00FF00"/><rect x="80" y="304" width="1" height="1" fill="#00FF00"/><rect x="81" y="304" width="1" height="1" fill="#00FF00"/><rect x="82" y="303" width="1" height="1" fill="#00FF00"/><rect x="83" y="303" width="1" height="1" fill="#00FF00"/><rect x="84" y="302" width="1" height="1" fill="#00FF00"/><rect x="85" y="301" width="1" height="1" fill="#00FF00"/><rect x="86" y="301" width="1" height="1" fill="#00FF00"/><rect x="87" y="300" width="1" height="1" fill="#00FF00"/><rect x="88" y="300" width="1" height="1" fill="#00FF00"/><rect x="89" y="299" width="1" height="1" fill="#00FF00"/><rect x="90" y="299" width="1" height="1" fill="#00FF00"/><rect x="91" y="298" width="1" height="1" fill="#00FF00"/><rect x="92" y="298" width="1" height="1" fill="#00FF00"/><rect x="93" y="297" width="1" height="1" fill="#00FF00"/><rect x="94" y="297" width="1" height="1" fill="#00FF00"/><rect x="95" y="296" width="1" height="1" fill="#00FF00"/><rect x="96" y="296" width="1" height="1" fill="#00FF00"/><rect x="97" y="295" width="1" height="1" fill="#00FF00"/><rect x="98" y="295" width="1" height="1" fill="#00FF00"/><rect x="99" y="294" width="1" height="1" fill="#00FF00"/><rect x="100" y="294" width="1" height="1" fill="#00FF00"/><rect x="101" y="293" width="1" height="1" fill="#00FF00"/><rect x="102" y="293" width="1" height="1" fill="#00FF00"/><rect x="103" y="292" width="1" height="1" fill="#00FF00"/><rect x="104" y="292" width="1" height="1" fill="#00FF00"/><rect x="105" y="291" width="1" height="1" fill="#00FF00"/><rect x="106" y="291" width="1" height="1" fill="#00FF00"/><rect x="107" y="290" width="1" height="1" fill="#00FF00"/><rect x="108" y="290" width="1" height="1" fill="#00FF00"/><rect x="109" y="289" width="1" height="1" fill="#00FF00"/><rect x="110" y="289" width="1" height="1" fill="#00FF00"/><rect x="111" y="288" width="1" height="1" fill="#00FF00"/><rect x="112" y="288" width="1" height="1" fill="#00FF00"/><rect x="113" y="287" width="1" height="1" fill="#00FF00"/><rect x="114" y="287" width="1" height="1" fill="#00FF00"/><rect x="115" y="286" width="1" height="1" fill="#00FF00"/><rect x="116" y="286" width="1" height="1" fill="#00FF00"/><rect x="117" y="285" width="1" height="1" fill="#00FF00"/><rect x="118" y="285" width="1" height="1" fill="#00FF00"/><rect x="119" y="284" width="1" height="1" fill="#00FF00"/><rect x="120" y="284" width="1" height="1" fill="#00FF00"/><rect x="121" y="283" width="1" height="1" fill="#00FF00"/><rect x="122" y="283" width="1" height="1" fill="#00FF00"/><rect x="123" y="282" width="1" height="1" fill="#00FF00"/><rect x="124" y="282" width="1" height="1" fill="#00FF00"/><rect x="125" y="281" width="1" height="1" fill="#00FF00"/><rect x="126" y="281" width="1" height="1" fill="#00FF00"/><rect x="127" y="281" width="1" height="1" fill="#00FF00"/><rect x="128" y="280" width="1" height="1" fill="#00FF00"/><rect x="129" y="280" width="1" height="1" fill="#00FF00"/><rect x="130" y="279" width="1" height="1" fill="#00FF00"/><rect x="131" y="279" width="1" height="1" fill="#00FF00"/><rect x="132" y="278" width="1" height="1" fill="#00FF00"/><rect x="133" y="278" width="1" height="1" fill="#00FF00"/><rect x="134" y="277" width="1" height="1" fill="#00FF00"/><rect x="135" y="277" width="1" height="1" fill="#00FF00"/><rect x="136" y="276" width="1" height="1" fill="#00FF00"/><rect x="137" y="276" width="1" height="1" fill="#00FF00"/><rect x="138" y="276" width="1" height="1" fill="#00FF00"/><rect x="139" y="275" width="1" height="1" fill="#00FF00"/><rect x="140" y="275" width="1" height="1" fill="#00FF00"/><rect x="141" y="274" width="1" height="1" fill="#00FF00"/><rect x="142" y="274" width="1" height="1" fill="#00FF00"/><rect x="143" y="273" width="1" height="1" fill="#00FF00"/><rect x="144" y="273" width="1" height="1" fill="#00FF00"/><rect x="145" y="272" width="1" height="1" fill="#00FF00"/><rect x="146" y="272" width="1" height="1" fill="#00FF00"/><rect x="147" y="272" width="1" height="1" fill="#00FF00"/><rect x="148" y="271" width="1" height="1" fill="#00FF00"/><rect x="149" y="271" width="1" height="1" fill="#00FF00"/><rect x="150" y="270" width="1" height="1" fill="#00FF00"/><rect x="151" y="270" width="1" height="1" fill="#00FF00"/><rect x="152" y="269" width="1" height="1" fill="#00FF00"/><rect x="153" y="269" width="1" height="1" fill="#00FF00"/><rect x="154" y="269" width="1" height="1" fill="#00FF00"/><rect x="155" y="268" width="1" height="1" fill="#00FF00"/><rect x="156" y="268" width="1" height="1" fill="#00FF00"/><rect x="157" y="267" width="1" height="1" fill="#00FF00"/><rect x="158" y="267" width="1" height="1" fill="#00FF00"/><rect x="159" y="266" width="1" height="1" fill="#00FF00"/><rect x="160" y="266" width="1" height="1" fill="#00FF00"/><rect x="161" y="266" width="1" height="1" fill="#00FF00"/><rect x="162" y="265" width="1" height="1" fill="#00FF00"/><rect x="163" y="265" width="1" height="1" fill="#00FF00"/><rect x="164" y="264" width="1" height="1" fill="#00FF00"/><rect x="165" y="264" width="1" height="1" fill="#00FF00"/><rect x="166" y="264" width="1" height="1" fill="#00FF00"/><rect x="167" y="263" width="1" height="1" fill="#00FF00"/><rect x="168" y="263" width="1" height="1" fill="#00FF00"/><rect x="169" y="262" width="1" height="1" fill="#00FF00"/><rect x="170" y="262" width="1" height="1" fill="#00FF00"/><rect x="171" y="262" width="1" height="1" fill="#00FF00"/><rect x="172" y="261" width="1" height="1" fill="#00FF00"/><rect x="173" y="261" width="1" height="1" fill="#00FF00"/><rect x="174" y="260" width="1" height="1" fill="#00FF00"/><rect x="175" y="260" width="1" height="1" fill="#00FF00"/><rect x="176" y="259" width="1" height="1" fill="#00FF00"/><rect x="177" y="259" width="1" height="1" fill="#00FF00"/><rect x="178" y="259" width="1" height="1" fill="#00FF00"/><rect x="179" y="258" width="1" height="1" fill="#00FF00"/><rect x="180" y="258" width="1" height="1" fill="#00FF00"/><rect x="181" y="257" width="1" height="1" fill="#00FF00"/><rect x="182" y="257" width="1" height="1" fill="#00FF00"/><rect x="183" y="257" width="1" height="1" fill="#00FF00"/><rect x="184" y="256" width="1" height="1" fill="#00FF00"/><rect x="185" y="256" width="1" height="1" fill="#00FF00"/><rect x="186" y="256" width="1" height="1" fill="#00FF00"/><rect x="187" y="255" width="1" height="1" fill="#00FF00"/><rect x="188" y="255" width="1" height="1" fill="#00FF00"/><rect x="189" y="254" width="1" height="1" fill="#00FF00"/><rect x="190" y="254" width="1" height="1" fill="#00FF00"/><rect x="191" y="254" width="1" height="1" fill="#00FF00"/><rect x="192" y="253" width="1" height="1" fill="#00FF00"/><rect x="193" y="253" width="1" height="1" fill="#00FF00"/><rect x="194" y="252" width="1" height="1" fill="#00FF00"/><rect x="195" y="252" width="1" height="1" fill="#00FF00"/><rect x="196" y="252" width="1" height="1" fill="#00FF00"/><rect x="197" y="251" width="1" height="1" fill="#00FF00"/><rect x="198" y="251" width="1" height="1" fill="#00FF00"/><rect x="199" y="250" width="1" height="1" fill="#00FF00"/><rect x="200" y="250" width="1" height="1" fill="#00FF00"/><rect x="201" y="250" width="1" height="1" fill="#00FF00"/><rect x="202" y="249" width="1" height="1" fill="#00FF00"/><rect x="203" y="249" width="1" height="1" fill="#00FF00"/><rect x="204" y="249" width="1" height="1" fill="#00FF00"/><rect x="205" y="248" width="1" height="1" fill="#00FF00"/><rect x="206" y="248" width="1" height="1" fill="#00FF00"/><rect x="207" y="247" width="1" height="1" fill="#00FF00"/><rect x="208" y="247" width="1" height="1" fill="#00FF00"/><rect x="209" y="247" width="1" height="1" fill="#00FF00"/><rect x="210" y="246" width="1" height="1" fill="#00FF00"/><rect x="211" y="246" width="1" height="1" fill="#00FF00"/><rect x="212" y="246" width="1" height="1" fill="#00FF00"/><rect x="213" y="245" width="1" height="1" fill="#00FF00"/><rect x="214" y="245" width="1" height="1" fill="#00FF00"/><rect x="215" y="244" width="1" height="1" fill="#00FF00"/><rect x="216" y="244" width="1" height="1" fill="#00FF00"/><rect x="217" y="244" width="1" height="1" fill="#00FF00"/><rect x="218" y="243" width="1" height="1" fill="#00FF00"/><rect x="219" y="243" width="1" height="1" fill="#00FF00"/><rect x="220" y="243" width="1" height="1" fill="#00FF00"/><rect x="221" y="242" width="1" height="1" fill="#00FF00"/><rect x="222" y="242" width="1" height="1" fill="#00FF00"/><rect x="223" y="242" width="1" height="1" fill="#00FF00"/><rect x="224" y="241" width="1" height="1" fill="#00FF00"/><rect x="225" y="241" width="1" height="1" fill="#00FF00"/><rect x="226" y="240" width="1" height="1" fill="#00FF00"/><rect x="227" y="240" width="1" height="1" fill="#00FF00"/><rect x="228" y="240" width="1" height="1" fill="#00FF00"/><rect x="229" y="239" width="1" height="1" fill="#00FF00"/><rect x="230" y="239" width="1" height="1" fill="#00FF00"/><rect x="231" y="239" width="1" height="1" fill="#00FF00"/><rect x="232" y="238" width="1" height="1" fill="#00FF00"/><rect x="233" y="238" width="1" height="1" fill="#00FF00"/><rect x="234" y="238" width="1" height="1" fill="#00FF00"/><rect x="235" y="237" width="1" height="1" fill="#00FF00"/><rect x="236" y="237" width="1" height="1" fill="#00FF00"/><rect x="237" y="237" width="1" height="1" fill="#00FF00"/><rect x="238" y="236" width="1" height="1" fill="#00FF00"/><rect x="239" y="236" width="1" height="1" fill="#00FF00"/><rect x="240" y="235" width="1" height="1" fill="#00FF00"/><rect x="241" y="235" width="1" height="1" fill="#00FF00"/><rect x="242" y="235" width="1" height="1" fill="#00FF00"/><rect x="243" y="234" width="1" height="1" fill="#00FF00"/><rect x="244" y="234" width="1" height="1" fill="#00FF00"/><rect x="245" y="234" width="1" height="1" fill="#00FF00"/><rect x="246" y="233" width="1" height="1" fill="#00FF00"/><rect x="247" y="233" width="1" height="1" fill="#00FF00"/><rect x="248" y="233" width="1" height="1" fill="#00FF00"/><rect x="249" y="232" width="1" height="1" fill="#00FF00"/><rect x="250" y="232" width="1" height="1" fill="#00FF00"/><rect x="251" y="232" width="1" height="1" fill="#00FF00"/><rect x="252" y="231" width="1" height="1" fill="#00FF00"/><rect x="253" y="231" width="1" height="1" fill="#00FF00"/><rect x="254" y="231" width="1" height="1" fill="#00FF00"/><rect x="255" y="230" width="1" height="1" fill="#00FF00"/><rect x="256" y="230" width="1" height="1" fill="#00FF00"/><rect x="257" y="230" width="1" height="1" fill="#00FF00"/><rect x="258" y="229" width="1" height="1" fill="#00FF00"/><rect x="259" y="229" width="1" height="1" fill="#00FF00"/><rect x="260" y="229" width="1" height="1" fill="#00FF00"/><rect x="261" y="228" width="1" height="1" fill="#00FF00"/><rect x="262" y="228" width="1" height="1" fill="#00FF00"/><rect x="263" y="228" width="1" height="1" fill="#00FF00"/><rect x="264" y="227" width="1" height="1" fill="#00FF00"/><rect x="265" y="227" width="1" height="1" fill="#00FF00"/><rect x="266" y="227" width="1" height="1" fill="#00FF00"/><rect x="267" y="226" width="1" height="1" fill="#00FF00"/><rect x="268" y="226" width="1" height="1" fill="#00FF00"/>
<rect x="269" y="139" width="1" height="287" fill="#FF0000"/>
</svg>
<div class="t" style="left:-2px;width:40px;text-align:right;top:144px;font-size:12px;line-height:12px;font-weight:normal;color:#000;">48</div>
<div class="t" style="left:-2px;width:40px;text-align:right;top:190px;font-size:12px;line-height:12px;font-weight:normal;color:#000;">40</div>
<div class="t" style="left:-2px;width:40px;text-align:right;top:235px;font-size:12px;line-height:12px;font-weight:normal;color:#000;">32</div>
<div class="t" style="left:-2px;width:40px;text-align:right;top:281px;font-size:12px;line-height:12px;font-weight:normal;color:#000;">24</div>
<div class="t" style="left:-2px;width:40px;text-align:right;top:327px;font-size:12px;line-height:12px;font-weight:normal;color:#000;">16</div>
<div class="t" style="left:-2px;width:40px;text-align:right;top:373px;font-size:12px;line-height:12px;font-weight:normal;color:#000;">8</div>
<svg style="left:0;top:0" width="645" height="531"><rect x="39" y="145" width="1" height="1" fill="#000"/><rect x="45" y="145" width="1" height="1" fill="#000"/><rect x="39" y="146" width="1" height="1" fill="#000"/><rect x="45" y="146" width="1" height="1" fill="#000"/><rect x="40" y="147" width="1" height="1" fill="#000"/><rect x="44" y="147" width="1" height="1" fill="#000"/><rect x="41" y="148" width="1" height="1" fill="#000"/><rect x="43" y="148" width="1" height="1" fill="#000"/><rect x="42" y="149" width="1" height="1" fill="#000"/><rect x="41" y="150" width="1" height="1" fill="#000"/><rect x="43" y="150" width="1" height="1" fill="#000"/><rect x="40" y="151" width="1" height="1" fill="#000"/><rect x="44" y="151" width="1" height="1" fill="#000"/><rect x="39" y="152" width="1" height="1" fill="#000"/><rect x="45" y="152" width="1" height="1" fill="#000"/><rect x="39" y="153" width="1" height="1" fill="#000"/><rect x="45" y="153" width="1" height="1" fill="#000"/><rect x="39" y="191" width="1" height="1" fill="#000"/><rect x="45" y="191" width="1" height="1" fill="#000"/><rect x="39" y="192" width="1" height="1" fill="#000"/><rect x="45" y="192" width="1" height="1" fill="#000"/><rect x="40" y="193" width="1" height="1" fill="#000"/><rect x="44" y="193" width="1" height="1" fill="#000"/><rect x="41" y="194" width="1" height="1" fill="#000"/><rect x="43" y="194" width="1" height="1" fill="#000"/><rect x="42" y="195" width="1" height="1" fill="#000"/><rect x="41" y="196" width="1" height="1" fill="#000"/><rect x="43" y="196" width="1" height="1" fill="#000"/><rect x="40" y="197" width="1" height="1" fill="#000"/><rect x="44" y="197" width="1" height="1" fill="#000"/><rect x="39" y="198" width="1" height="1" fill="#000"/><rect x="45" y="198" width="1" height="1" fill="#000"/><rect x="39" y="199" width="1" height="1" fill="#000"/><rect x="45" y="199" width="1" height="1" fill="#000"/><rect x="39" y="236" width="1" height="1" fill="#000"/><rect x="45" y="236" width="1" height="1" fill="#000"/><rect x="39" y="237" width="1" height="1" fill="#000"/><rect x="45" y="237" width="1" height="1" fill="#000"/><rect x="40" y="238" width="1" height="1" fill="#000"/><rect x="44" y="238" width="1" height="1" fill="#000"/><rect x="41" y="239" width="1" height="1" fill="#000"/><rect x="43" y="239" width="1" height="1" fill="#000"/><rect x="42" y="240" width="1" height="1" fill="#000"/><rect x="41" y="241" width="1" height="1" fill="#000"/><rect x="43" y="241" width="1" height="1" fill="#000"/><rect x="40" y="242" width="1" height="1" fill="#000"/><rect x="44" y="242" width="1" height="1" fill="#000"/><rect x="39" y="243" width="1" height="1" fill="#000"/><rect x="45" y="243" width="1" height="1" fill="#000"/><rect x="39" y="244" width="1" height="1" fill="#000"/><rect x="45" y="244" width="1" height="1" fill="#000"/><rect x="39" y="282" width="1" height="1" fill="#000"/><rect x="45" y="282" width="1" height="1" fill="#000"/><rect x="39" y="283" width="1" height="1" fill="#000"/><rect x="45" y="283" width="1" height="1" fill="#000"/><rect x="40" y="284" width="1" height="1" fill="#000"/><rect x="44" y="284" width="1" height="1" fill="#000"/><rect x="41" y="285" width="1" height="1" fill="#000"/><rect x="43" y="285" width="1" height="1" fill="#000"/><rect x="42" y="286" width="1" height="1" fill="#000"/><rect x="41" y="287" width="1" height="1" fill="#000"/><rect x="43" y="287" width="1" height="1" fill="#000"/><rect x="40" y="288" width="1" height="1" fill="#000"/><rect x="44" y="288" width="1" height="1" fill="#000"/><rect x="39" y="289" width="1" height="1" fill="#000"/><rect x="45" y="289" width="1" height="1" fill="#000"/><rect x="39" y="290" width="1" height="1" fill="#000"/><rect x="45" y="290" width="1" height="1" fill="#000"/><rect x="39" y="328" width="1" height="1" fill="#000"/><rect x="45" y="328" width="1" height="1" fill="#000"/><rect x="39" y="329" width="1" height="1" fill="#000"/><rect x="45" y="329" width="1" height="1" fill="#000"/><rect x="40" y="330" width="1" height="1" fill="#000"/><rect x="44" y="330" width="1" height="1" fill="#000"/><rect x="41" y="331" width="1" height="1" fill="#000"/><rect x="43" y="331" width="1" height="1" fill="#000"/><rect x="42" y="332" width="1" height="1" fill="#000"/><rect x="41" y="333" width="1" height="1" fill="#000"/><rect x="43" y="333" width="1" height="1" fill="#000"/><rect x="40" y="334" width="1" height="1" fill="#000"/><rect x="44" y="334" width="1" height="1" fill="#000"/><rect x="39" y="335" width="1" height="1" fill="#000"/><rect x="45" y="335" width="1" height="1" fill="#000"/><rect x="39" y="336" width="1" height="1" fill="#000"/><rect x="45" y="336" width="1" height="1" fill="#000"/><rect x="39" y="374" width="1" height="1" fill="#000"/><rect x="45" y="374" width="1" height="1" fill="#000"/><rect x="39" y="375" width="1" height="1" fill="#000"/><rect x="45" y="375" width="1" height="1" fill="#000"/><rect x="40" y="376" width="1" height="1" fill="#000"/><rect x="44" y="376" width="1" height="1" fill="#000"/><rect x="41" y="377" width="1" height="1" fill="#000"/><rect x="43" y="377" width="1" height="1" fill="#000"/><rect x="42" y="378" width="1" height="1" fill="#000"/><rect x="41" y="379" width="1" height="1" fill="#000"/><rect x="43" y="379" width="1" height="1" fill="#000"/><rect x="40" y="380" width="1" height="1" fill="#000"/><rect x="44" y="380" width="1" height="1" fill="#000"/><rect x="39" y="381" width="1" height="1" fill="#000"/><rect x="45" y="381" width="1" height="1" fill="#000"/><rect x="39" y="382" width="1" height="1" fill="#000"/><rect x="45" y="382" width="1" height="1" fill="#000"/></svg>
<div class="t" style="left:422px;top:141px;font-size:12px;line-height:12px;font-weight:normal;color:#000;">24</div>
<div class="t" style="left:422px;top:187px;font-size:12px;line-height:12px;font-weight:normal;color:#000;">20</div>
<div class="t" style="left:422px;top:233px;font-size:12px;line-height:12px;font-weight:normal;color:#000;">16</div>
<div class="t" style="left:422px;top:279px;font-size:12px;line-height:12px;font-weight:normal;color:#000;">12</div>
<div class="t" style="left:422px;top:325px;font-size:12px;line-height:12px;font-weight:normal;color:#000;">8</div>
<div class="t" style="left:422px;top:371px;font-size:12px;line-height:12px;font-weight:normal;color:#000;">4</div>
<div class="t" style="left:33.5px;width:40px;text-align:center;top:431px;font-size:12px;line-height:12px;font-weight:normal;color:#000;">0</div>
<div class="t" style="left:79.125px;width:40px;text-align:center;top:431px;font-size:12px;line-height:12px;font-weight:normal;color:#000;">10</div>
<div class="t" style="left:124.75px;width:40px;text-align:center;top:431px;font-size:12px;line-height:12px;font-weight:normal;color:#000;">20</div>
<div class="t" style="left:170.375px;width:40px;text-align:center;top:431px;font-size:12px;line-height:12px;font-weight:normal;color:#000;">30</div>
<div class="t" style="left:216.0px;width:40px;text-align:center;top:431px;font-size:12px;line-height:12px;font-weight:normal;color:#000;">40</div>
<div class="t" style="left:261.625px;width:40px;text-align:center;top:431px;font-size:12px;line-height:12px;font-weight:normal;color:#000;">50</div>
<div class="t" style="left:307.25px;width:40px;text-align:center;top:431px;font-size:12px;line-height:12px;font-weight:normal;color:#000;">60</div>
<div class="t" style="left:352.875px;width:40px;text-align:center;top:431px;font-size:12px;line-height:12px;font-weight:normal;color:#000;">70</div>
<div class="t" style="left:398.5px;width:40px;text-align:center;top:431px;font-size:12px;line-height:12px;font-weight:normal;color:#000;">80</div>
<div class="r" style="left:14px;top:448px;width:422px;height:11px;border:1px solid #686868;border-radius:3px;background:#fff;"></div>
<svg style="left:0;top:0" width="645" height="531" shape-rendering="crispEdges"><defs><linearGradient id="pg" x1="0" y1="0" x2="0" y2="1"><stop offset="0" stop-color="#8CE68C"/><stop offset="0.5" stop-color="#1ED41E"/><stop offset="1" stop-color="#7EE27E"/></linearGradient></defs><rect x="18" y="451" width="6" height="5" fill="url(#pg)"/><rect x="26" y="451" width="6" height="5" fill="url(#pg)"/><rect x="34" y="451" width="6" height="5" fill="url(#pg)"/><rect x="42" y="451" width="6" height="5" fill="url(#pg)"/><rect x="50" y="451" width="6" height="5" fill="url(#pg)"/><rect x="58" y="451" width="6" height="5" fill="url(#pg)"/><rect x="66" y="451" width="6" height="5" fill="url(#pg)"/><rect x="74" y="451" width="6" height="5" fill="url(#pg)"/><rect x="82" y="451" width="6" height="5" fill="url(#pg)"/><rect x="90" y="451" width="6" height="5" fill="url(#pg)"/><rect x="98" y="451" width="6" height="5" fill="url(#pg)"/><rect x="106" y="451" width="6" height="5" fill="url(#pg)"/><rect x="114" y="451" width="6" height="5" fill="url(#pg)"/><rect x="122" y="451" width="6" height="5" fill="url(#pg)"/><rect x="130" y="451" width="6" height="5" fill="url(#pg)"/><rect x="138" y="451" width="6" height="5" fill="url(#pg)"/><rect x="146" y="451" width="6" height="5" fill="url(#pg)"/><rect x="154" y="451" width="6" height="5" fill="url(#pg)"/><rect x="162" y="451" width="6" height="5" fill="url(#pg)"/><rect x="170" y="451" width="6" height="5" fill="url(#pg)"/><rect x="178" y="451" width="6" height="5" fill="url(#pg)"/><rect x="186" y="451" width="6" height="5" fill="url(#pg)"/><rect x="194" y="451" width="6" height="5" fill="url(#pg)"/><rect x="202" y="451" width="6" height="5" fill="url(#pg)"/><rect x="210" y="451" width="6" height="5" fill="url(#pg)"/><rect x="218" y="451" width="6" height="5" fill="url(#pg)"/><rect x="226" y="451" width="6" height="5" fill="url(#pg)"/><rect x="234" y="451" width="6" height="5" fill="url(#pg)"/><rect x="242" y="451" width="6" height="5" fill="url(#pg)"/><rect x="250" y="451" width="6" height="5" fill="url(#pg)"/><rect x="258" y="451" width="6" height="5" fill="url(#pg)"/><rect x="266" y="451" width="6" height="5" fill="url(#pg)"/><rect x="274" y="451" width="6" height="5" fill="url(#pg)"/><rect x="282" y="451" width="6" height="5" fill="url(#pg)"/><rect x="290" y="451" width="6" height="5" fill="url(#pg)"/><rect x="298" y="451" width="6" height="5" fill="url(#pg)"/><rect x="306" y="451" width="6" height="5" fill="url(#pg)"/><rect x="314" y="451" width="6" height="5" fill="url(#pg)"/><rect x="322" y="451" width="6" height="5" fill="url(#pg)"/><rect x="330" y="451" width="6" height="5" fill="url(#pg)"/><rect x="338" y="451" width="6" height="5" fill="url(#pg)"/><rect x="346" y="451" width="6" height="5" fill="url(#pg)"/><rect x="354" y="451" width="6" height="5" fill="url(#pg)"/><rect x="362" y="451" width="6" height="5" fill="url(#pg)"/><rect x="370" y="451" width="6" height="5" fill="url(#pg)"/><rect x="378" y="451" width="6" height="5" fill="url(#pg)"/><rect x="386" y="451" width="6" height="5" fill="url(#pg)"/><rect x="394" y="451" width="6" height="5" fill="url(#pg)"/><rect x="402" y="451" width="6" height="5" fill="url(#pg)"/><rect x="410" y="451" width="6" height="5" fill="url(#pg)"/><rect x="418" y="451" width="6" height="5" fill="url(#pg)"/><rect x="426" y="451" width="6" height="5" fill="url(#pg)"/><rect x="434" y="451" width="1" height="5" fill="url(#pg)"/></svg>
<div class="r" style="left:14px;top:462px;width:422px;height:60px;border:1px solid #7F9DB9;background:#fff;"></div>
<div class="r" style="left:417px;top:463px;width:17px;height:58px;background:linear-gradient(to right,#F3F1EC,#FEFEFB);"></div>
<div class="r" style="left:418px;top:463px;width:16px;height:17px;border:1px solid #fff;border-radius:3px;background:linear-gradient(135deg,#C8D6FA 0%,#B9CDF6 60%,#D2DEFB 100%);"></div>
<svg style="left:418px;top:463px" width="16" height="17"><path d="M4 10.5 L8 6.5 L12 10.5" stroke="#4D6185" stroke-width="2" fill="none"/></svg>
<div class="r" style="left:418px;top:503px;width:16px;height:17px;border:1px solid #fff;border-radius:3px;background:linear-gradient(135deg,#C8D6FA 0%,#B9CDF6 60%,#D2DEFB 100%);"></div>
<svg style="left:418px;top:503px" width="16" height="17"><path d="M4 6.5 L8 10.5 L12 6.5" stroke="#4D6185" stroke-width="2" fill="none"/></svg>
<div class="r" style="left:418px;top:496px;width:16px;height:7px;border:1px solid #fff;border-radius:2px;background:linear-gradient(to right,#C0D2F8,#B8CCF5);"></div>
<svg style="left:0;top:0" width="645" height="531"><path d="M451 132.5 H446.5 L444.5 134.5 V299.5 L446.5 301.5 H535.5 L537.5 299.5 V134.5 L535.5 132.5 H534" fill="none" stroke="#D0D0BF" stroke-width="1"/><path d="M549 132.5 H544.5 L542.5 134.5 V255.5 L544.5 257.5 H627.5 L629.5 255.5 V134.5 L627.5 132.5 H616" fill="none" stroke="#D0D0BF" stroke-width="1"/><path d="M549 275.5 H544.5 L542.5 277.5 V439.5 L544.5 441.5 H627.5 L629.5 439.5 V277.5 L627.5 275.5 H626" fill="none" stroke="#D0D0BF" stroke-width="1"/><path d="M451 319.5 H446.5 L444.5 321.5 V409.5 L446.5 411.5 H535.5 L537.5 409.5 V321.5 L535.5 319.5 H517" fill="none" stroke="#D0D0BF" stroke-width="1"/><path d="M451 429.5 H446.5 L444.5 431.5 V519.5 L446.5 521.5 H535.5 L537.5 519.5 V431.5 L535.5 429.5 H494" fill="none" stroke="#D0D0BF" stroke-width="1"/><path d="M549 460.5 H544.5 L542.5 462.5 V518.5 L544.5 520.5 H627.5 L629.5 518.5 V462.5 L627.5 460.5 H611" fill="none" stroke="#D0D0BF" stroke-width="1"/></svg>
<div class="r" style="left:461px;top:155px;width:59px;height:18px;background:#FFFFFF;"></div>
<div class="r" style="left:461px;top:155px;width:58px;height:17px;background:#ACA899;"></div>
<div class="r" style="left:462px;top:156px;width:57px;height:16px;background:#000000;"></div>
<div class="r" style="left:461px;top:194px;width:59px;height:18px;background:#FFFFFF;"></div>
<div class="r" style="left:461px;top:194px;width:58px;height:17px;background:#ACA899;"></div>
<div class="r" style="left:462px;top:195px;width:57px;height:16px;background:#000000;"></div>
<div class="r" style="left:461px;top:233px;width:59px;height:18px;background:#FFFFFF;"></div>
<div class="r" style="left:461px;top:233px;width:58px;height:17px;background:#ACA899;"></div>
<div class="r" style="left:462px;top:234px;width:57px;height:16px;background:#000000;"></div>
<div class="r" style="left:461px;top:272px;width:59px;height:18px;background:#FFFFFF;"></div>
<div class="r" style="left:461px;top:272px;width:58px;height:17px;background:#ACA899;"></div>
<div class="r" style="left:462px;top:273px;width:57px;height:16px;background:#000000;"></div>
<div class="r" style="left:556px;top:155px;width:59px;height:18px;background:#FFFFFF;"></div>
<div class="r" style="left:556px;top:155px;width:58px;height:17px;background:#ACA899;"></div>
<div class="r" style="left:557px;top:156px;width:57px;height:16px;background:#000000;"></div>
<div class="r" style="left:556px;top:194px;width:59px;height:18px;background:#FFFFFF;"></div>
<div class="r" style="left:556px;top:194px;width:58px;height:17px;background:#ACA899;"></div>
<div class="r" style="left:557px;top:195px;width:57px;height:16px;background:#000000;"></div>
<div class="r" style="left:556px;top:230px;width:59px;height:18px;background:#FFFFFF;"></div>
<div class="r" style="left:556px;top:230px;width:58px;height:17px;background:#ACA899;"></div>
<div class="r" style="left:557px;top:231px;width:57px;height:16px;background:#000000;"></div>
<div class="r" style="left:556px;top:298px;width:59px;height:18px;background:#FFFFFF;"></div>
<div class="r" style="left:556px;top:298px;width:58px;height:17px;background:#ACA899;"></div>
<div class="r" style="left:557px;top:299px;width:57px;height:16px;background:#000000;"></div>
<div class="r" style="left:556px;top:337px;width:59px;height:18px;background:#FFFFFF;"></div>
<div class="r" style="left:556px;top:337px;width:58px;height:17px;background:#ACA899;"></div>
<div class="r" style="left:557px;top:338px;width:57px;height:16px;background:#000000;"></div>
<div class="r" style="left:556px;top:378px;width:59px;height:18px;background:#FFFFFF;"></div>
<div class="r" style="left:556px;top:378px;width:58px;height:17px;background:#ACA899;"></div>
<div class="r" style="left:557px;top:379px;width:57px;height:16px;background:#000000;"></div>
<div class="r" style="left:556px;top:415px;width:59px;height:18px;background:#FFFFFF;"></div>
<div class="r" style="left:556px;top:415px;width:58px;height:17px;background:#ACA899;"></div>
<div class="r" style="left:557px;top:416px;width:57px;height:16px;background:#000000;"></div>
<div class="r" style="left:461px;top:336px;width:59px;height:18px;background:#FFFFFF;"></div>
<div class="r" style="left:461px;top:336px;width:58px;height:17px;background:#ACA899;"></div>
<div class="r" style="left:462px;top:337px;width:57px;height:16px;background:#000000;"></div>
<div class="r" style="left:458px;top:451px;width:65px;height:18px;background:#FFFFFF;"></div>
<div class="r" style="left:458px;top:451px;width:64px;height:17px;background:#ACA899;"></div>
<div class="r" style="left:459px;top:452px;width:63px;height:16px;background:#000000;"></div>
<div class="r" style="left:458px;top:492px;width:65px;height:18px;background:#FFFFFF;"></div>
<div class="r" style="left:458px;top:492px;width:64px;height:17px;background:#ACA899;"></div>
<div class="r" style="left:459px;top:493px;width:63px;height:16px;background:#000000;"></div>
<div class="r" style="left:556px;top:492px;width:59px;height:18px;background:#FFFFFF;"></div>
<div class="r" style="left:556px;top:492px;width:58px;height:17px;background:#ACA899;"></div>
<div class="r" style="left:557px;top:493px;width:57px;height:16px;background:#000000;"></div>
<div class="r" style="left:484px;top:394px;width:13px;height:13px;border:1px solid #1C5180;background:linear-gradient(135deg,#DCDCD7 0%,#FFFFFF 100%);"></div>
<svg style="left:0;top:0" width="645" height="531" font-family="Liberation Sans"><g><text x="9.00" y="43" font-size="11" font-weight="normal" textLength="26.09" lengthAdjust="spacingAndGlyphs" fill="#000">Datei</text><text x="48.00" y="43" font-size="11" font-weight="normal" textLength="83.00" lengthAdjust="spacingAndGlyphs" fill="#000">Test durchführen</text><text x="141.00" y="43" font-size="11" font-weight="normal" textLength="27.00" lengthAdjust="spacingAndGlyphs" fill="#000">Extra</text><text x="179.00" y="43" font-size="11" font-weight="normal" textLength="21.00" lengthAdjust="spacingAndGlyphs" fill="#000">Hilfe</text><text x="172.00" y="76" font-size="11" font-weight="normal" textLength="26.14" lengthAdjust="spacingAndGlyphs" fill="#000">[0:0]</text><text x="205.00" y="76" font-size="11" font-weight="normal" textLength="44.00" lengthAdjust="spacingAndGlyphs" fill="#000">PLEXTOR</text><text x="253.00" y="76" font-size="11" font-weight="normal" textLength="24.00" lengthAdjust="spacingAndGlyphs" fill="#000">CD-R</text><text x="285.00" y="76" font-size="11" font-weight="normal" textLength="83.00" lengthAdjust="spacingAndGlyphs" fill="#000">PX-W5224A 1.04</text><text x="505.00" y="76" font-size="11" font-weight="normal" textLength="25.00" lengthAdjust="spacingAndGlyphs" fill="#000">Start</text><text x="573.00" y="76" font-size="11" font-weight="normal" textLength="43.00" lengthAdjust="spacingAndGlyphs" fill="#000">Beenden</text><text x="18.00" y="113" font-size="12" font-weight="normal" textLength="55.00" lengthAdjust="spacingAndGlyphs" fill="#000">Benchmark</text><text x="84.00" y="115" font-size="12" font-weight="normal" textLength="64.03" lengthAdjust="spacingAndGlyphs" fill="#000">Disk erstellen</text><text x="159.00" y="115" font-size="12" font-weight="normal" textLength="43.00" lengthAdjust="spacingAndGlyphs" fill="#000">Disk-Info</text><text x="212.00" y="115" font-size="12" font-weight="normal" textLength="57.00" lengthAdjust="spacingAndGlyphs" fill="#000">Diskqualität</text><text x="279.00" y="115" font-size="12" font-weight="normal" textLength="57.00" lengthAdjust="spacingAndGlyphs" fill="#000">Disc prüfen</text><text x="454.00" y="137" font-size="12" font-weight="normal" textLength="77.99" lengthAdjust="spacingAndGlyphs" fill="#0046D5">Geschwindigkeit</text><text x="551.00" y="137" font-size="12" font-weight="normal" textLength="65.03" lengthAdjust="spacingAndGlyphs" fill="#0046D5">Zugriffszeiten</text><text x="552.00" y="280" font-size="12" font-weight="normal" textLength="73.00" lengthAdjust="spacingAndGlyphs" fill="#0046D5">CPU Belastung</text><text x="453.00" y="324" font-size="12" font-weight="normal" textLength="62.00" lengthAdjust="spacingAndGlyphs" fill="#0046D5">DAE Qualität</text><text x="453.00" y="434" font-size="12" font-weight="normal" textLength="40.08" lengthAdjust="spacingAndGlyphs" fill="#0046D5">Disktyp:</text><text x="551.00" y="465" font-size="12" font-weight="normal" textLength="58.00" lengthAdjust="spacingAndGlyphs" fill="#0046D5">Schnittstelle</text><text x="460.00" y="153" font-size="12" font-weight="normal" textLength="61.00" lengthAdjust="spacingAndGlyphs" fill="#000">Durchschnitt</text><text x="478.00" y="192" font-size="12" font-weight="normal" textLength="26.14" lengthAdjust="spacingAndGlyphs" fill="#000">Start:</text><text x="476.00" y="230" font-size="12" font-weight="normal" textLength="29.12" lengthAdjust="spacingAndGlyphs" fill="#000">Ende:</text><text x="481.00" y="267" font-size="12" font-weight="normal" textLength="21.00" lengthAdjust="spacingAndGlyphs" fill="#000">Typ:</text><text x="566.00" y="152" font-size="12" font-weight="normal" textLength="39.00" lengthAdjust="spacingAndGlyphs" fill="#000">Zufällig:</text><text x="575.00" y="192" font-size="12" font-weight="normal" textLength="21.18" lengthAdjust="spacingAndGlyphs" fill="#000">1/3:</text><text x="575.00" y="228" font-size="12" font-weight="normal" textLength="21.00" lengthAdjust="spacingAndGlyphs" fill="#000">Voll:</text><text x="577.00" y="296" font-size="12" font-weight="normal" textLength="18.21" lengthAdjust="spacingAndGlyphs" fill="#000">1 x:</text><text x="578.00" y="335" font-size="12" font-weight="normal" textLength="17.00" lengthAdjust="spacingAndGlyphs" fill="#000">2 x:</text><text x="578.00" y="376" font-size="12" font-weight="normal" textLength="17.00" lengthAdjust="spacingAndGlyphs" fill="#000">4 x:</text><text x="578.00" y="413" font-size="12" font-weight="normal" textLength="17.00" lengthAdjust="spacingAndGlyphs" fill="#000">8 x:</text><text x="472.00" y="373" font-size="12" font-weight="normal" textLength="40.98" lengthAdjust="spacingAndGlyphs" fill="#000">Genauer</text><text x="475.00" y="386" font-size="12" font-weight="normal" textLength="34.00" lengthAdjust="spacingAndGlyphs" fill="#000">Stream</text><text x="481.00" y="447" font-size="12" font-weight="normal" textLength="21.00" lengthAdjust="spacingAndGlyphs" fill="#000">Typ:</text><text x="474.00" y="486" font-size="12" font-weight="normal" textLength="34.10" lengthAdjust="spacingAndGlyphs" fill="#000">Länge:</text><text x="558.00" y="486" font-size="12" font-weight="normal" textLength="54.06" lengthAdjust="spacingAndGlyphs" fill="#000">Burst-Rate:</text><text x="472.00" y="167" font-size="12" font-weight="bold" textLength="37.97" lengthAdjust="spacingAndGlyphs" fill="#00FFFF">27.46x</text><text x="471.00" y="206" font-size="12" font-weight="bold" textLength="39.00" lengthAdjust="spacingAndGlyphs" fill="#00FFFF">18.34x</text><text x="471.00" y="245" font-size="12" font-weight="bold" textLength="39.00" lengthAdjust="spacingAndGlyphs" fill="#00FFFF">34.81x</text><text x="479.00" y="284" font-size="12" font-weight="bold" textLength="23.96" lengthAdjust="spacingAndGlyphs" fill="#00FFFF">CAV</text><text x="570.00" y="167" font-size="12" font-weight="bold" textLength="32.97" lengthAdjust="spacingAndGlyphs" fill="#00FFFF">60 ms</text><text x="570.00" y="206" font-size="12" font-weight="bold" textLength="32.97" lengthAdjust="spacingAndGlyphs" fill="#00FFFF">67 ms</text><text x="565.00" y="242" font-size="12" font-weight="bold" textLength="41.00" lengthAdjust="spacingAndGlyphs" fill="#00FFFF">100 ms</text><text x="575.00" y="310" font-size="12" font-weight="bold" textLength="21.00" lengthAdjust="spacingAndGlyphs" fill="#00FFFF">1 %</text><text x="575.00" y="349" font-size="12" font-weight="bold" textLength="21.00" lengthAdjust="spacingAndGlyphs" fill="#00FFFF">1 %</text><text x="576.00" y="390" font-size="12" font-weight="bold" textLength="19.95" lengthAdjust="spacingAndGlyphs" fill="#00FFFF">4 %</text><text x="576.00" y="427" font-size="12" font-weight="bold" textLength="19.95" lengthAdjust="spacingAndGlyphs" fill="#00FFFF">8 %</text><text x="466.00" y="463" font-size="12" font-weight="bold" textLength="48.00" lengthAdjust="spacingAndGlyphs" fill="#00FFFF">Data CD</text><text x="466.00" y="504" font-size="12" font-weight="bold" textLength="49.98" lengthAdjust="spacingAndGlyphs" fill="#00FFFF">48:05.17</text><text x="563.00" y="504" font-size="12" font-weight="bold" textLength="44.98" lengthAdjust="spacingAndGlyphs" fill="#00FFFF">21 MB/s</text><text x="34.00" y="475" font-size="12" font-weight="normal" textLength="49.00" lengthAdjust="spacingAndGlyphs" fill="#000">[03:43:06]</text><text x="34.00" y="489" font-size="12" font-weight="normal" textLength="49.00" lengthAdjust="spacingAndGlyphs" fill="#000">[03:43:15]</text><text x="34.00" y="503" font-size="12" font-weight="normal" textLength="49.00" lengthAdjust="spacingAndGlyphs" fill="#000">[03:43:16]</text><text x="34.00" y="517" font-size="12" font-weight="normal" textLength="49.00" lengthAdjust="spacingAndGlyphs" fill="#000">[03:43:16]</text><text x="92.00" y="475" font-size="12" font-weight="normal" textLength="138.99" lengthAdjust="spacingAndGlyphs" fill="#000">Auswurf Zeit: 1.29 Sekunden</text><text x="91.00" y="489" font-size="12" font-weight="normal" textLength="126.00" lengthAdjust="spacingAndGlyphs" fill="#000">Lade Zeit: 9.22 Sekunden</text><text x="91.00" y="503" font-size="12" font-weight="normal" textLength="154.00" lengthAdjust="spacingAndGlyphs" fill="#000">Erkennungszeit: 0.66 Sekunden</text><text x="92.00" y="517" font-size="12" font-weight="normal" textLength="85.00" lengthAdjust="spacingAndGlyphs" fill="#000">Verstrichene Zeit:</text><text x="182.00" y="517" font-size="12" font-weight="normal" textLength="19.95" lengthAdjust="spacingAndGlyphs" fill="#000">0:11</text></g></svg>
</body></html>
